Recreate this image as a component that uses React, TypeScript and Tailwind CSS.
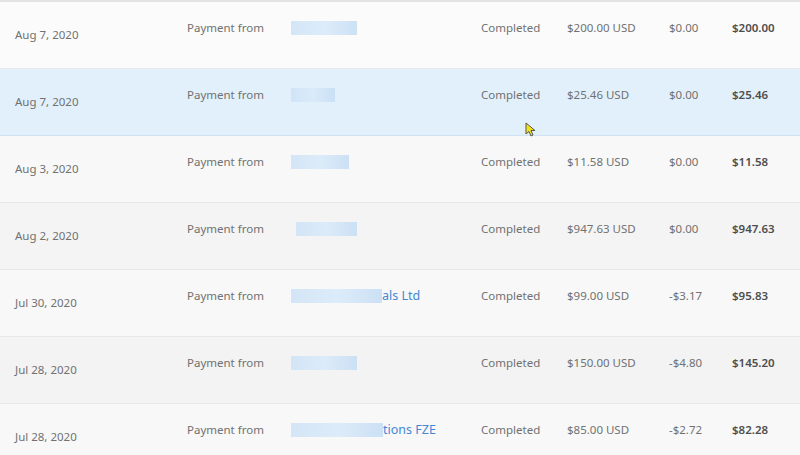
const rows = [
  { date: "Aug 7, 2020", blur: 66, tail: "", gross: "$200.00 USD", fee: "$0.00", net: "$200.00", bg: "bg-[#fbfbfb]" },
  { date: "Aug 7, 2020", blur: 44, tail: "", gross: "$25.46 USD", fee: "$0.00", net: "$25.46", bg: "bg-[#e2f0fc]" },
  { date: "Aug 3, 2020", blur: 58, tail: "", gross: "$11.58 USD", fee: "$0.00", net: "$11.58", bg: "bg-[#f8f8f8]" },
  { date: "Aug 2, 2020", blur: 61, tail: "", gross: "$947.63 USD", fee: "$0.00", net: "$947.63", bg: "bg-[#f4f4f4]", shift: true },
  { date: "Jul 30, 2020", blur: 91, tail: "als Ltd", gross: "$99.00 USD", fee: "-$3.17", net: "$95.83", bg: "bg-[#f8f8f8]" },
  { date: "Jul 28, 2020", blur: 66, tail: "", gross: "$150.00 USD", fee: "-$4.80", net: "$145.20", bg: "bg-[#f3f3f3]" },
  { date: "Jul 28, 2020", blur: 92, tail: "tions FZE", gross: "$85.00 USD", fee: "-$2.72", net: "$82.28", bg: "bg-[#f8f8f8]" },
]

function Blur({ width, shift }: { width: number; shift?: boolean }) {
  return (
    <span
      className={`inline-block shrink-0 h-[14px] bg-gradient-to-r from-[#cfe3f6] via-[#d9eaf9] to-[#c7def4] opacity-90 ${shift ? "ml-[5px]" : ""}`}
      style={{ width }}
    />
  )
}

export default function App() {
  return (
    <div
      className="w-[800px] h-[455px] overflow-hidden bg-[#f8f8f8] border-t-2 border-[#e4e4e4] relative text-[11.5px] text-[#717171]"
      style={{ fontFamily: '"Noto Sans", "Open Sans", sans-serif' }}
    >
      {rows.map((r, i) => (
        <div
          key={i}
          className={`grid grid-cols-[187px_104px_190px_86px_102px_63px_1fr] h-[67px] border-b ${
            i === 1 ? "border-[#cfe2f2]" : "border-[#e8e8e8]"
          } ${r.bg}`}
        >
          <div className="pl-[15px] pt-[25px] leading-4">{r.date}</div>
          <div className="pt-[18px] leading-4">Payment from</div>
          <div className="pt-[18px] leading-4 flex items-center h-[34px] text-[#4189d6] whitespace-nowrap">
            <Blur width={r.blur} shift={r.shift} />
            {r.tail && <span className="text-[12.5px]">{r.tail}</span>}
          </div>
          <div className="pt-[18px] leading-4">Completed</div>
          <div className="pt-[18px] leading-4">{r.gross}</div>
          <div className="pt-[18px] leading-4">{r.fee}</div>
          <div className="pt-[18px] leading-4 font-semibold text-[#4d4d4d]">{r.net}</div>
        </div>
      ))}
      <svg className="absolute left-[525px] top-[120px]" width="12" height="16" viewBox="0 0 12 16">
        <path d="M1 1 L1 12 L4 9.5 L6 14 L8 13 L6 8.5 L10 8.5 Z" fill="#f2e21c" stroke="#555" strokeWidth="1" />
      </svg>
    </div>
  )
}
